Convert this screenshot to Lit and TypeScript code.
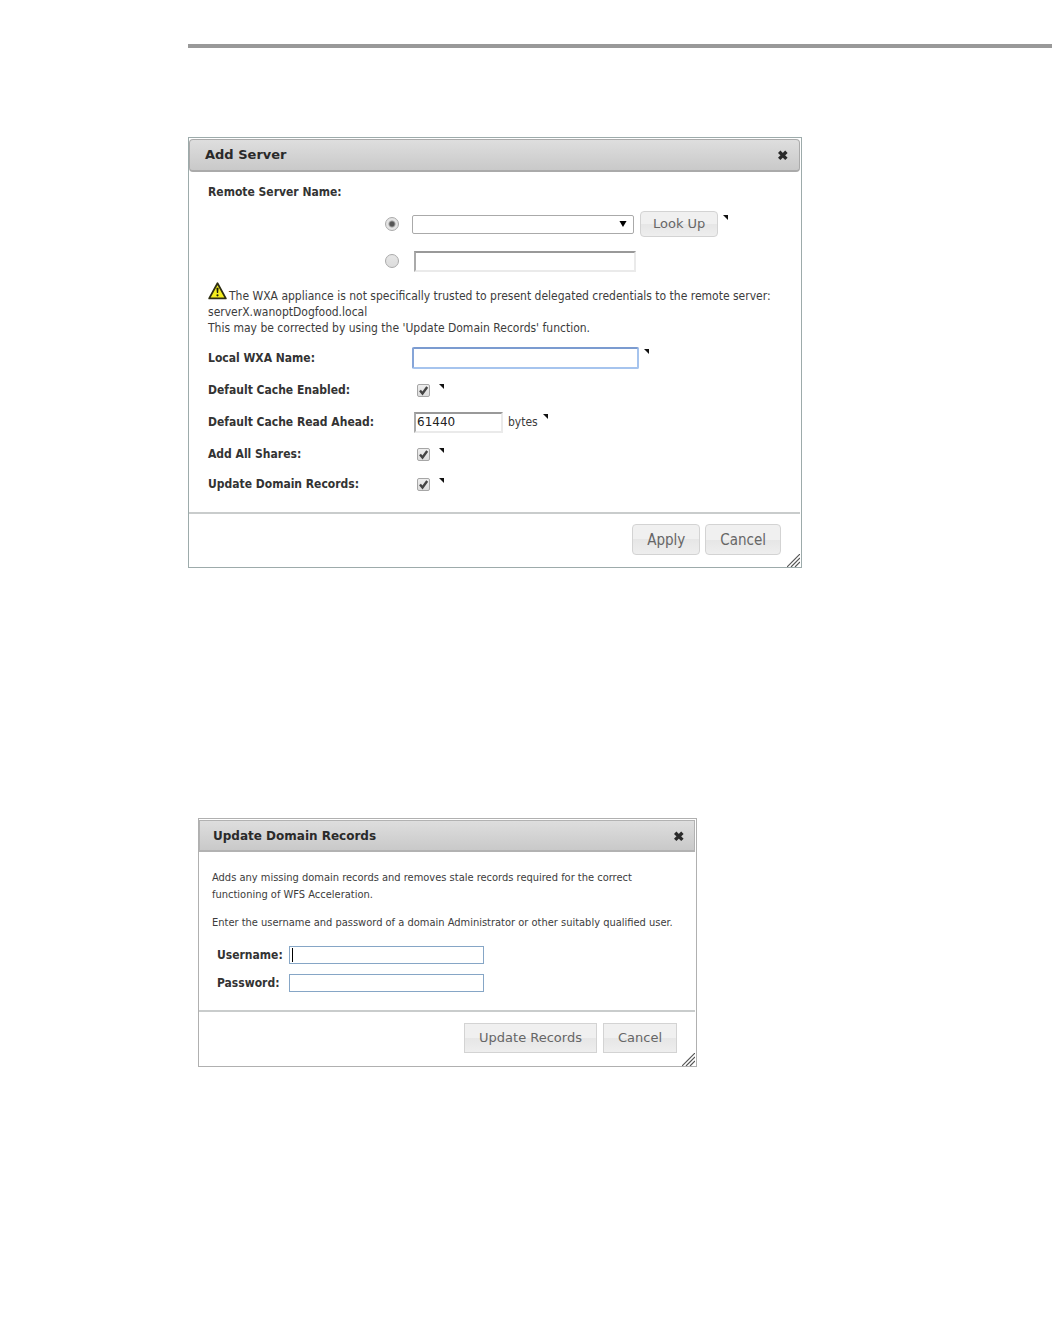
import { LitElement, html, svg, css, nothing } from "lit";
import { customElement, property } from "lit/decorators.js";

const closeIcon = html`<svg width="12" height="12" viewBox="0 0 12 12" aria-hidden="true">
  <path d="M2.200 2.700L9.400 9.900M9.400 2.700L2.200 9.900" stroke="#2b2b2b" stroke-width="3.4" stroke-linecap="butt" />
</svg>`;

const warningIcon = html`<svg class="warning" width="19" height="18" viewBox="0 0 19 18" role="img" aria-label="Warning">
  <path d="M9.5 1.2L17.8 16.4H1.2Z" fill="#f4ee1f" stroke="#2e2e12" stroke-width="1.8" stroke-linejoin="round" />
  <path d="M8.4 5.800h2.200l-.5 5.200H8.900z" fill="#1d1d0c" />
  <circle cx="9.500" cy="13.300" r="1.100" fill="#1d1d0c" />
</svg>`;

const marker = html`<svg class="marker" width="5" height="5" viewBox="0 0 5 5" aria-hidden="true">
  <path d="M0 0H5V5Z" fill="#111" />
</svg>`;

/** Framed window with a title bar, a body slot and an action bar. */
@customElement("dialog-window")
export class DialogWindow extends LitElement {
  @property() heading = "";
  @property({ type: Boolean, reflect: true }) square = false;

  static styles = css`
    :host {
      display: block;
      box-sizing: border-box;
      border: 1px solid #9dabab;
      background: #fff;
      padding-top: 1px;
    }
    :host([square]) {
      border-color: #b0b0b0;
    }
    .bar {
      display: flex;
      align-items: center;
      justify-content: space-between;
      box-sizing: border-box;
      height: 33px;
      margin-right: 1px;
      padding: 0 10px 0 15px;
      border: 1px solid #aaa;
      border-bottom-width: 2px;
      border-radius: 4px;
      background: linear-gradient(#dedede, #c9c9c9);
    }
    :host([square]) .bar {
      height: 32px;
      padding: 0 9px 0 13px;
      border-color: #b2b2b2;
      border-radius: 0;
    }
    h2 {
      margin: 0;
      font: bold 13px/18px "DejaVu Sans", sans-serif;
      color: #2a2a2a;
    }
    :host([square]) h2 {
      font-size: 12px;
    }
    .close {
      display: flex;
      padding: 0;
      border: 0;
      background: none;
    }
    .actions {
      display: flex;
      justify-content: flex-end;
      gap: 5px;
      position: relative;
      padding: 10px 19px 12px;
      margin-right: 1px;
      border-top: 2px solid #c9cccc;
    }
    :host([square]) .actions {
      gap: 6px;
      padding: 11px 18px 13px;
    }
    .grip {
      position: absolute;
      right: 0;
      bottom: 0;
    }
  `;

  render() {
    return html`
      <header class="bar">
        <h2>${this.heading}</h2>
        <button class="close" aria-label="Close">${closeIcon}</button>
      </header>
      <slot></slot>
      <footer class="actions">
        <slot name="actions"></slot>
        <svg class="grip" width="13" height="13" viewBox="0 0 13 13" aria-hidden="true">
          ${[0, 4, 8].map((o) => svg`<path d="M${o} 13L13 ${o}" stroke="#555" stroke-width="1.2" />`)}
        </svg>
      </footer>
    `;
  }
}

@customElement("app-root")
export class AppRoot extends LitElement {
  static styles = css`
    :host {
      display: block;
      min-height: 100vh;
      box-sizing: border-box;
      padding: 44px 0 40px 188px;
      background: #fff;
      color: #3c3c3c;
      font: 11px/16px "DejaVu Sans Condensed", "DejaVu Sans", sans-serif;
    }
    .rule {
      height: 4px;
      margin: 0 0 89px;
      border: 0;
      background: #999;
    }
    .server {
      max-width: 614px;
    }
    .domain {
      max-width: 499px;
      margin: 250px 10px 0;
    }
    .body {
      padding: 4px 19px 14px;
    }
    .row {
      display: flex;
      align-items: center;
      min-height: 32px;
    }
    .row.tall {
      min-height: 42px;
    }
    .row.short {
      min-height: 28px;
    }
    .name {
      flex: 0 0 204px;
      font-weight: bold;
      font-size: 12px;
      color: #333;
    }
    .pick {
      flex: 0 0 204px;
      box-sizing: border-box;
      padding-right: 13px;
      display: flex;
      justify-content: flex-end;
    }
    .field {
      display: flex;
      align-items: flex-start;
      gap: 5px;
    }
    .field .marker {
      margin-top: 2px;
    }
    .field .lookup + .marker {
      margin-top: 4px;
    }
    .field .tick + .marker {
      margin: 0 0 0 4px;
    }
    input,
    select,
    button {
      box-sizing: border-box;
      margin: 0;
      font: inherit;
      color: inherit;
      appearance: none;
      border-radius: 0;
      outline: 0;
    }
    .radio {
      width: 14px;
      height: 14px;
      border: 1px solid #aaa;
      border-radius: 50%;
      background: linear-gradient(#e6e6e6, #dcdcdc);
    }
    .radio:checked {
      background: radial-gradient(circle, #555 0 2px, #e4e4e4 4px);
    }
    .drop,
    .tick {
      display: grid;
      align-items: center;
    }
    .drop > *,
    .tick > * {
      grid-area: 1 / 1;
    }
    .drop {
      width: 222px;
      align-self: center;
    }
    .drop select {
      width: 100%;
      height: 19px;
      border: 1px solid #aaa;
      border-radius: 2px;
      background: #fff;
    }
    .drop svg {
      justify-self: end;
      margin-right: 7px;
      pointer-events: none;
    }
    .tick {
      margin-left: 5px;
    }
    .tick input {
      width: 13px;
      height: 13px;
      border: 1px solid #a6a6a6;
      border-radius: 2px;
      background: linear-gradient(#eee, #dcdcdc);
    }
    .tick svg {
      pointer-events: none;
    }
    .text {
      width: 222px;
      height: 21px;
      margin-left: 2px;
      padding: 0 1px;
      border: 2px solid #eaeaea;
      border-top-color: #999;
      border-left-color: #aaa;
      background: #fff;
    }
    .text.active {
      width: 227px;
      height: 22px;
      margin-left: 0;
      border-color: #7b9bd0 #a6c4ee #a6c4ee #86a5d8;
      border-radius: 2px;
    }
    .text.size {
      width: 89px;
      font: 12px/16px "DejaVu Sans", sans-serif;
      color: #222;
    }
    .unit {
      align-self: center;
      font-size: 12px;
    }
    .btn {
      height: 31px;
      padding: 0 14px;
      border: 1px solid #d3d3d3;
      border-radius: 4px;
      background: linear-gradient(#f0f0f0 0 50%, #e6e6e6 50%, #eee);
      color: #666;
      font: 15px/18px "DejaVu Sans Condensed", "DejaVu Sans", sans-serif;
    }
    .btn.lookup {
      height: 26px;
      margin-left: 1px;
      padding: 0 12px;
      font: 13px/18px "DejaVu Sans", sans-serif;
    }
    .domain .btn {
      height: 30px;
      border-radius: 0;
      font: 13px/18px "DejaVu Sans", sans-serif;
    }
    .note {
      margin: 0 0 6px;
      font-size: 12px;
    }
    .warning {
      vertical-align: baseline;
      margin-right: 2px;
    }
    .domain .body {
      padding: 17px 13px 14px;
      line-height: 17px;
    }
    .domain p {
      margin: 0 0 11px;
    }
    .creds {
      display: grid;
      grid-template-columns: auto 1fr;
      gap: 10px 6px;
      align-items: center;
      padding: 4px 5px;
    }
    .creds label {
      font-weight: bold;
      font-size: 12px;
      line-height: 18px;
      color: #333;
    }
    .creds .entry {
      width: 195px;
      height: 18px;
      padding: 0 2px;
      border: 1px solid #86a6c6;
      background: #fff;
    }
    .caret {
      display: grid;
      align-items: center;
    }
    .caret > * {
      grid-area: 1 / 1;
    }
    .caret i {
      width: 1px;
      height: 14px;
      margin-left: 3px;
      background: #000;
    }
  `;

  private tickRow(id: string, label: string, short = false) {
    return html`<div class="row ${short ? "short" : ""}">
      <label class="name" for=${id}>${label}</label>
      <div class="field">
        <span class="tick">
          <input type="checkbox" id=${id} checked />
          <svg width="13" height="13" viewBox="0 0 13 13" aria-hidden="true">
            <path d="M3 6.500L5.500 9.500L10.200 3" fill="none" stroke="#444" stroke-width="2.400" />
          </svg>
        </span>
        ${marker}
      </div>
    </div>`;
  }

  private credential(id: string, label: string, type: string, caret = false) {
    return html`<label for=${id}>${label}</label>
      <span class="caret">
        <input class="entry" id=${id} type=${type} />
        ${caret ? html`<i></i>` : nothing}
      </span>`;
  }

  render() {
    return html`
      <hr class="rule" />
      <dialog-window class="server" heading="Add Server">
        <div class="body">
          <div class="row"><span class="name">Remote Server Name:</span></div>
          <div class="row">
            <span class="pick">
              <input class="radio" type="radio" name="remote" aria-label="Choose server" checked />
            </span>
            <div class="field">
              <span class="drop">
                <select aria-label="Remote server"><option></option></select>
                <svg width="8" height="8" viewBox="0 0 9 8" aria-hidden="true">
                  <path d="M.5 .5H8.500L4.500 7.500Z" fill="#000" />
                </svg>
              </span>
              <button class="btn lookup">Look Up</button>
              ${marker}
            </div>
          </div>
          <div class="row tall">
            <span class="pick">
              <input class="radio" type="radio" name="remote" aria-label="Type server name" />
            </span>
            <input class="text" type="text" aria-label="Remote server name" />
          </div>
          <p class="note">
            ${warningIcon}The WXA appliance is not specifically trusted to present delegated credentials to the remote server:<br />
            serverX.wanoptDogfood.local<br />
            This may be corrected by using the 'Update Domain Records' function.
          </p>
          <div class="row">
            <label class="name" for="local">Local WXA Name:</label>
            <div class="field"><input class="text active" id="local" type="text" />${marker}</div>
          </div>
          ${this.tickRow("cache", "Default Cache Enabled:")}
          <div class="row">
            <label class="name" for="ahead">Default Cache Read Ahead:</label>
            <div class="field">
              <input class="text size" id="ahead" type="text" value="61440" />
              <span class="unit">bytes</span>
              ${marker}
            </div>
          </div>
          ${this.tickRow("shares", "Add All Shares:")}
          ${this.tickRow("records", "Update Domain Records:", true)}
        </div>
        <button class="btn" slot="actions">Apply</button>
        <button class="btn" slot="actions">Cancel</button>
      </dialog-window>

      <dialog-window class="domain" heading="Update Domain Records" square>
        <div class="body">
          <p>
            Adds any missing domain records and removes stale records required for the correct<br />
            functioning of WFS Acceleration.
          </p>
          <p>Enter the username and password of a domain Administrator or other suitably qualified user.</p>
          <div class="creds">
            ${this.credential("user", "Username:", "text", true)}
            ${this.credential("pass", "Password:", "password")}
          </div>
        </div>
        <button class="btn" slot="actions">Update Records</button>
        <button class="btn" slot="actions">Cancel</button>
      </dialog-window>
    `;
  }
}
